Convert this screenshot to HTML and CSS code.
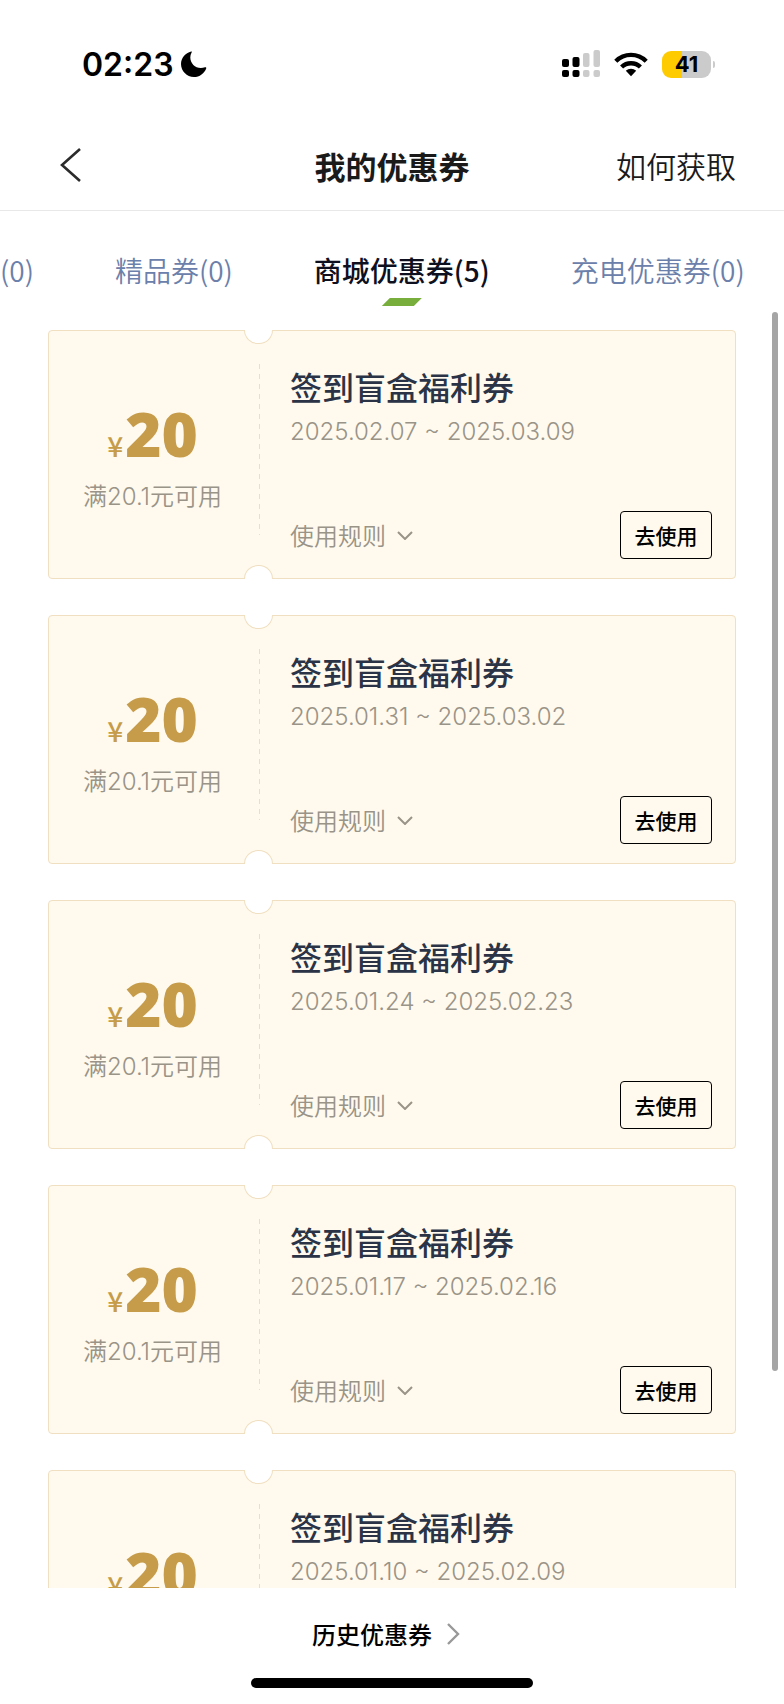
FILE: index.html
```html
<!DOCTYPE html>
<html lang="zh-CN">
<head>
    <meta charset="UTF-8">
    <meta name="viewport" content="width=device-width, initial-scale=1.0">
    <title>我的优惠券</title>
    <link rel="stylesheet" href="styles.css">
</head>
<body>

    <div class="status-bar">
        <div class="status-left">
            <span class="time">02:23</span>
            <svg width="26" height="26" viewBox="0 0 26 26"><path d="M10.2 .6C4.4 1.9 0 7 0 13.1 0 20.2 5.8 26 12.9 26c5.700 0 10.600-3.800 12.300-8.600.3-.9-.4-1.400-1.200-1.100-1.300.5-2.700.7-4.200.7C14 17 9.300 12.300 9.300 6.500c0-1.700.4-3.300 1.200-4.700.5-.8.4-1.400-.3-1.200z"/></svg>
        </div>
        <div class="status-right">
            <svg width="38" height="28" viewBox="0 0 38 28">
                <rect x="0" y="9" width="7" height="8" rx="2"/>
                <rect x="0" y="20" width="7" height="7" rx="2"/>
                <rect x="10.500" y="7" width="7" height="10" rx="2"/>
                <rect x="10.500" y="20" width="7" height="7" rx="2"/>
                <g fill="#cbcbcb">
                    <rect x="21" y="3" width="6.500" height="14" rx="2"/>
                    <rect x="21" y="20" width="6.500" height="7" rx="2"/>
                    <rect x="31.500" y="0" width="6.500" height="17" rx="2"/>
                    <rect x="31.500" y="20" width="6.500" height="7" rx="2"/>
                </g>
            </svg>
            <svg class="wifi" width="34" height="25" viewBox="0 0 34 25">
                <g fill="none" stroke="#000" stroke-width="4.400">
                    <path d="M1.800 9.200C10.200.8 23.800.8 32.200 9.200"/>
                    <path d="M7.600 15c5.200-5 13.600-5 18.800 0"/>
                </g>
                <path d="M11.800 18.800c2.900-2.700 7.500-2.700 10.400 0L17 24.200z"/>
            </svg>
            <div class="battery"><span>41</span></div>
        </div>
    </div>

    <header class="nav">
        <button class="back" aria-label="返回">
            <svg width="22" height="34" viewBox="0 0 22 34"><path d="M20 1 2 17l18 16" fill="none" stroke="#2b2b2b" stroke-width="2.600"/></svg>
        </button>
        <h1>我的优惠券</h1>
        <a class="how" href="#">如何获取</a>
    </header>

    <nav class="tabs">
        <a href="#">(0)</a>
        <a href="#">精品券(0)</a>
        <a href="#" class="active">商城优惠券(5)</a>
        <a href="#">充电优惠券(0)</a>
    </nav>

    <main class="list">
        <article class="coupon">
            <div class="amount">
                <div class="price"><span class="yen">¥</span>20</div>
                <div class="limit">满20.1元可用</div>
            </div>
            <div class="info">
                <h2>签到盲盒福利券</h2>
                <div class="date">2025.02.07 ~ 2025.03.09</div>
                <div class="bottom">
                    <button class="rules">使用规则 <svg width="16" height="10" viewBox="0 0 16 10"><path d="m1 2 7 7 7-7"/></svg></button>
                    <button class="use">去使用</button>
                </div>
            </div>
        </article>

        <article class="coupon">
            <div class="amount">
                <div class="price"><span class="yen">¥</span>20</div>
                <div class="limit">满20.1元可用</div>
            </div>
            <div class="info">
                <h2>签到盲盒福利券</h2>
                <div class="date">2025.01.31 ~ 2025.03.02</div>
                <div class="bottom">
                    <button class="rules">使用规则 <svg width="16" height="10" viewBox="0 0 16 10"><path d="m1 2 7 7 7-7"/></svg></button>
                    <button class="use">去使用</button>
                </div>
            </div>
        </article>

        <article class="coupon">
            <div class="amount">
                <div class="price"><span class="yen">¥</span>20</div>
                <div class="limit">满20.1元可用</div>
            </div>
            <div class="info">
                <h2>签到盲盒福利券</h2>
                <div class="date">2025.01.24 ~ 2025.02.23</div>
                <div class="bottom">
                    <button class="rules">使用规则 <svg width="16" height="10" viewBox="0 0 16 10"><path d="m1 2 7 7 7-7"/></svg></button>
                    <button class="use">去使用</button>
                </div>
            </div>
        </article>

        <article class="coupon">
            <div class="amount">
                <div class="price"><span class="yen">¥</span>20</div>
                <div class="limit">满20.1元可用</div>
            </div>
            <div class="info">
                <h2>签到盲盒福利券</h2>
                <div class="date">2025.01.17 ~ 2025.02.16</div>
                <div class="bottom">
                    <button class="rules">使用规则 <svg width="16" height="10" viewBox="0 0 16 10"><path d="m1 2 7 7 7-7"/></svg></button>
                    <button class="use">去使用</button>
                </div>
            </div>
        </article>

        <article class="coupon">
            <div class="amount">
                <div class="price"><span class="yen">¥</span>20</div>
            </div>
            <div class="info">
                <h2>签到盲盒福利券</h2>
                <div class="date">2025.01.10 ~ 2025.02.09</div>
            </div>
        </article>

        <div class="scroll-thumb"></div>
    </main>

    <footer class="footer">
        <a class="history" href="#">历史优惠券 <svg width="14" height="22" viewBox="0 0 14 22"><path d="m2 1 10 10L2 21" fill="none" stroke="#999" stroke-width="2.400"/></svg></a>
        <div class="home-bar"></div>
    </footer>

</body>
</html>
```
FILE: styles.css
```css
* {
    box-sizing: border-box;
}
body {
    margin: 0;
    height: 100vh;
    display: flex;
    flex-direction: column;
    overflow: hidden;
    background: #fff;
    color: #1a1a1a;
    font-family: "Noto Sans CJK SC", sans-serif;
}
h1, h2 {
    margin: 0;
}
a {
    color: inherit;
    text-decoration: none;
}
button {
    padding: 0;
    border: none;
    background: none;
    font-family: inherit;
    cursor: pointer;
}

/* ステータスバー */
.status-bar {
    flex: none;
    height: 128px;
    padding: 0 73px 0 82px;
    display: flex;
    justify-content: space-between;
    align-items: center;
    color: #000;
    font-family: Inter, sans-serif;
    font-weight: 600;
}
.status-left,
.status-right {
    display: flex;
    align-items: center;
}
.status-left {
    gap: 7px;
}
.status-right {
    gap: 14px;
}
.time {
    font-size: 32px;
}
.battery {
    position: relative;
    width: 49px;
    height: 27px;
    border-radius: 9px;
    background: linear-gradient(to right, #fecb00 41%, #cbcbcb 41%);
    font-size: 22px;
    font-weight: 700;
    line-height: 27px;
    text-align: center;
}
.battery::after {
    content: "";
    position: absolute;
    left: 51px;
    top: 10px;
    width: 2px;
    height: 7px;
    border-radius: 0 2px 2px 0;
    background: #cbcbcb;
}

/* ナビゲーション */
.nav {
    flex: none;
    height: 83px;
    padding: 0 48px 8px;
    display: grid;
    grid-template-columns: 1fr auto 1fr;
    align-items: center;
    border-bottom: 1px solid #e8e8e8;
}
.back {
    justify-self: start;
    display: flex;
    margin-left: 12px;
}
.nav h1 {
    font-size: 31px;
    font-weight: 700;
}
.how {
    justify-self: end;
    font-size: 30px;
    font-weight: 350;
}

/* タブ */
.tabs {
    flex: none;
    height: 101px;
    padding-top: 36px;
    display: flex;
    gap: 81px;
    white-space: nowrap;
    font-size: 28px;
    font-weight: 350;
    line-height: 46px;
    color: #6b80aa;
}
.tabs .active {
    position: relative;
    color: #0e1020;
    font-weight: 500;
}
.tabs .active::after {
    content: "";
    position: absolute;
    left: 50%;
    bottom: 6px;
    width: 40px;
    height: 8px;
    margin-left: -20px;
    background: #78ae3c;
    clip-path: polygon(20% 0, 100% 0, 80% 100%, 0 100%);
}

/* クーポン一覧 */
.list {
    position: relative;
    flex: 1;
    min-height: 0;
    padding: 18px 48px 0;
    overflow: hidden;
}
.coupon {
    position: relative;
    display: flex;
    height: 249px;
    margin-bottom: 36px;
    border: 1px solid #f0dfc0;
    border-radius: 4px;
    background: #fffaed;
}
/* 上下の半円の切り込み */
.coupon::before,
.coupon::after {
    content: "";
    position: absolute;
    left: 195px;
    width: 27px;
    height: 13px;
    border: 1px solid #f0dfc0;
    background: #fff;
}
.coupon::before {
    top: -1px;
    border-top: none;
    border-radius: 0 0 14px 14px;
}
.coupon::after {
    bottom: -1px;
    border-bottom: none;
    border-radius: 14px 14px 0 0;
}
.amount {
    width: 211px;
    margin: 33px 0 43px;
    padding: 35px 4px 0 0;
    text-align: center;
    color: #999388;
    background: repeating-linear-gradient(to bottom, #e6e0c4 0 5px, transparent 5px 10px) right / 1px 100% no-repeat;
}
.price {
    color: #c69c4b;
    font-family: "Open Sans", sans-serif;
    font-size: 62px;
    font-weight: 800;
    line-height: 68px;
}
.yen {
    margin-right: 2px;
    font-family: "Noto Sans CJK SC", sans-serif;
    font-size: 28px;
    font-weight: 500;
    line-height: 28px;
}
.limit {
    margin-top: 12px;
    font-family: Inter, "Noto Sans CJK SC", sans-serif;
    font-size: 24px;
    font-weight: 350;
    line-height: 36px;
}
.info {
    flex: 1;
    display: flex;
    flex-direction: column;
    padding: 30px 23px 19px 30px;
}
.info h2 {
    color: #2b3447;
    font-size: 32px;
    font-weight: 500;
    line-height: 50px;
}
.date {
    color: #999388;
    font-family: Inter, sans-serif;
    font-size: 24px;
    font-weight: 300;
    line-height: 42px;
}
.bottom {
    margin-top: auto;
    display: flex;
    justify-content: space-between;
    align-items: center;
}
.rules {
    display: flex;
    align-items: center;
    gap: 11px;
    color: #999388;
    font-size: 24px;
    font-weight: 350;
    line-height: 36px;
    padding-bottom: 1px;
}
.rules path {
    fill: none;
    stroke: #999388;
    stroke-width: 2;
}
.use {
    width: 92px;
    height: 48px;
    border: 1px solid #000;
    border-radius: 4px;
    color: #000;
    font-size: 21px;
    font-weight: 500;
}
.scroll-thumb {
    position: absolute;
    top: 0;
    right: 6px;
    width: 6px;
    height: 83%;
    border-radius: 3px;
    background: #a5a5a5;
}

/* フッター */
.footer {
    flex: none;
    height: 116px;
    padding: 26px 0 16px;
    display: flex;
    flex-direction: column;
    justify-content: space-between;
    align-items: center;
}
.history {
    display: flex;
    align-items: center;
    gap: 14px;
    padding-right: 12px;
    color: #000;
    font-size: 24px;
    font-weight: 500;
    line-height: 40px;
}
.home-bar {
    width: 36%;
    height: 10px;
    border-radius: 5px;
    background: #000;
}
```
